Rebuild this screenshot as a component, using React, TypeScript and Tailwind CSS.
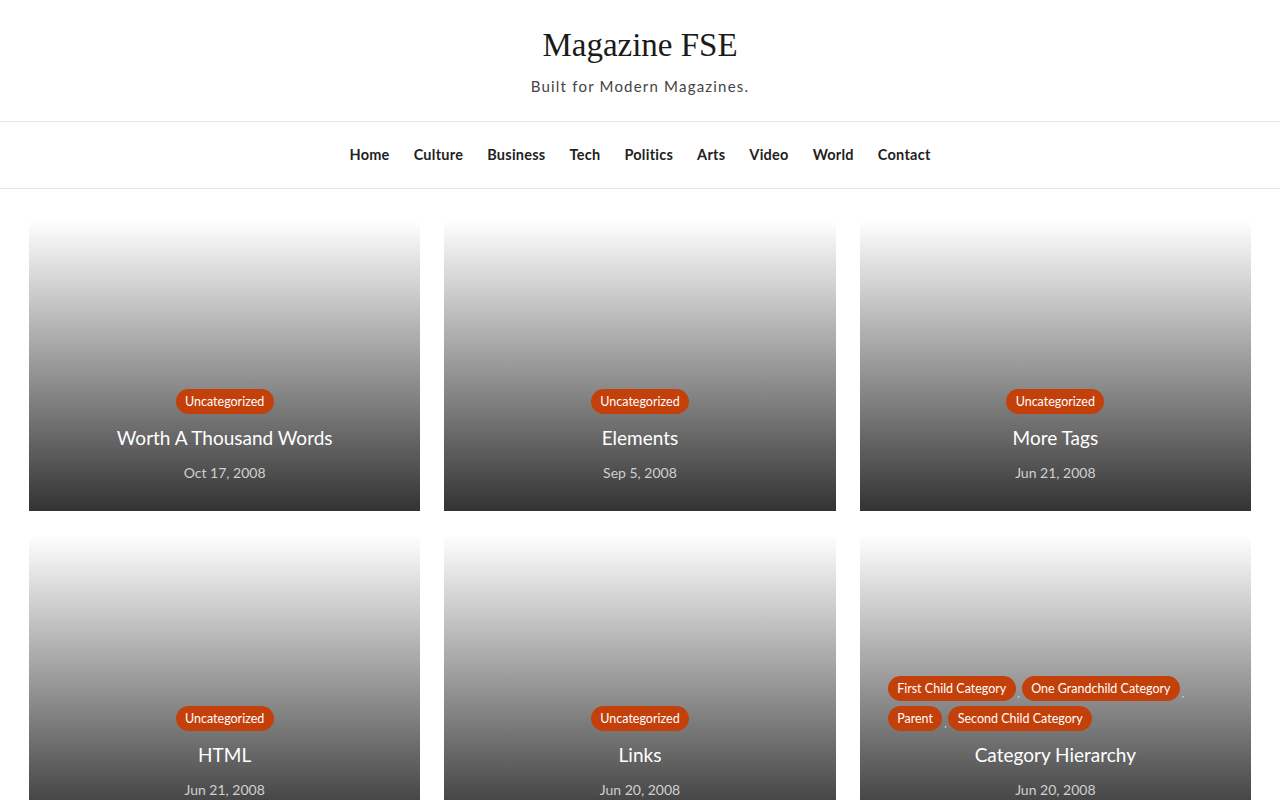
import React from "react";

const sans = { fontFamily: "Lato, 'Noto Sans', sans-serif" };

type Post = { cats: string[]; title: string; date: string; left?: boolean };

const posts: Post[] = [
  { cats: ["Uncategorized"], title: "Worth A Thousand Words", date: "Oct 17, 2008" },
  { cats: ["Uncategorized"], title: "Elements", date: "Sep 5, 2008" },
  { cats: ["Uncategorized"], title: "More Tags", date: "Jun 21, 2008" },
  { cats: ["Uncategorized"], title: "HTML", date: "Jun 21, 2008" },
  { cats: ["Uncategorized"], title: "Links", date: "Jun 20, 2008" },
  {
    cats: ["First Child Category", "One Grandchild Category", "Parent", "Second Child Category"],
    title: "Category Hierarchy",
    date: "Jun 20, 2008",
    left: true,
  },
];

function Card({ p, tall }: { p: Post; tall: boolean }) {
  return (
    <div
      className={`${tall ? "h-[293px]" : "h-[291px]"} flex flex-col justify-end px-[28px] pb-[28px] bg-[linear-gradient(to_bottom,rgba(0,0,0,0)_0%,rgba(0,0,0,0.8)_100%)]`}
    >
      <div className={`flex flex-wrap items-end gap-y-[5px] ${p.left ? "justify-start" : "justify-center"}`}>
        {p.cats.map((c, i) => (
          <span key={c} className="flex items-end">
            <span className="inline-block rounded-full bg-[#c4400a] text-white text-[12.5px] leading-[25px] h-[25px] px-[9.5px]">
              {c}
            </span>
            {i < p.cats.length - 1 && <span className="text-white text-[8px] leading-[10px] mx-[2px] mb-[2px]">,</span>}
          </span>
        ))}
      </div>
      <h2 className="text-white text-[19px] leading-[24px] text-center mt-[12px]">{p.title}</h2>
      <div className="text-[#d0d0d0] text-[14px] leading-[20px] text-center mt-[13px]">{p.date}</div>
    </div>
  );
}

export default function App() {
  const nav = ["Home", "Culture", "Business", "Tech", "Politics", "Arts", "Video", "World", "Contact"];
  return (
    <div className="bg-white min-h-[800px] overflow-hidden" style={sans}>
      <header className="pt-[22px] pb-[25px] text-center">
        <h1
          className="text-[33px] leading-[46px] text-[#1a1a1a]"
          style={{ fontFamily: "'Liberation Serif', 'DejaVu Serif', serif" }}
        >
          Magazine FSE
        </h1>
        <p className="mt-[8px] text-[15px] leading-[20px] tracking-[1.2px] text-[#444]">Built for Modern Magazines.</p>
      </header>
      <nav className="border-y border-[#e5e5e5] h-[68px] flex items-center justify-center gap-[24px]">
        {nav.map((n) => (
          <a key={n} className="text-[14.5px] tracking-[0.25px] font-bold text-[#222]">
            {n}
          </a>
        ))}
      </nav>
      <main className="px-[29px] pt-[31px] grid grid-cols-3 gap-[24px]">
        {posts.map((p, i) => (
          <Card key={p.title} p={p} tall={i >= 3} />
        ))}
      </main>
    </div>
  );
}
